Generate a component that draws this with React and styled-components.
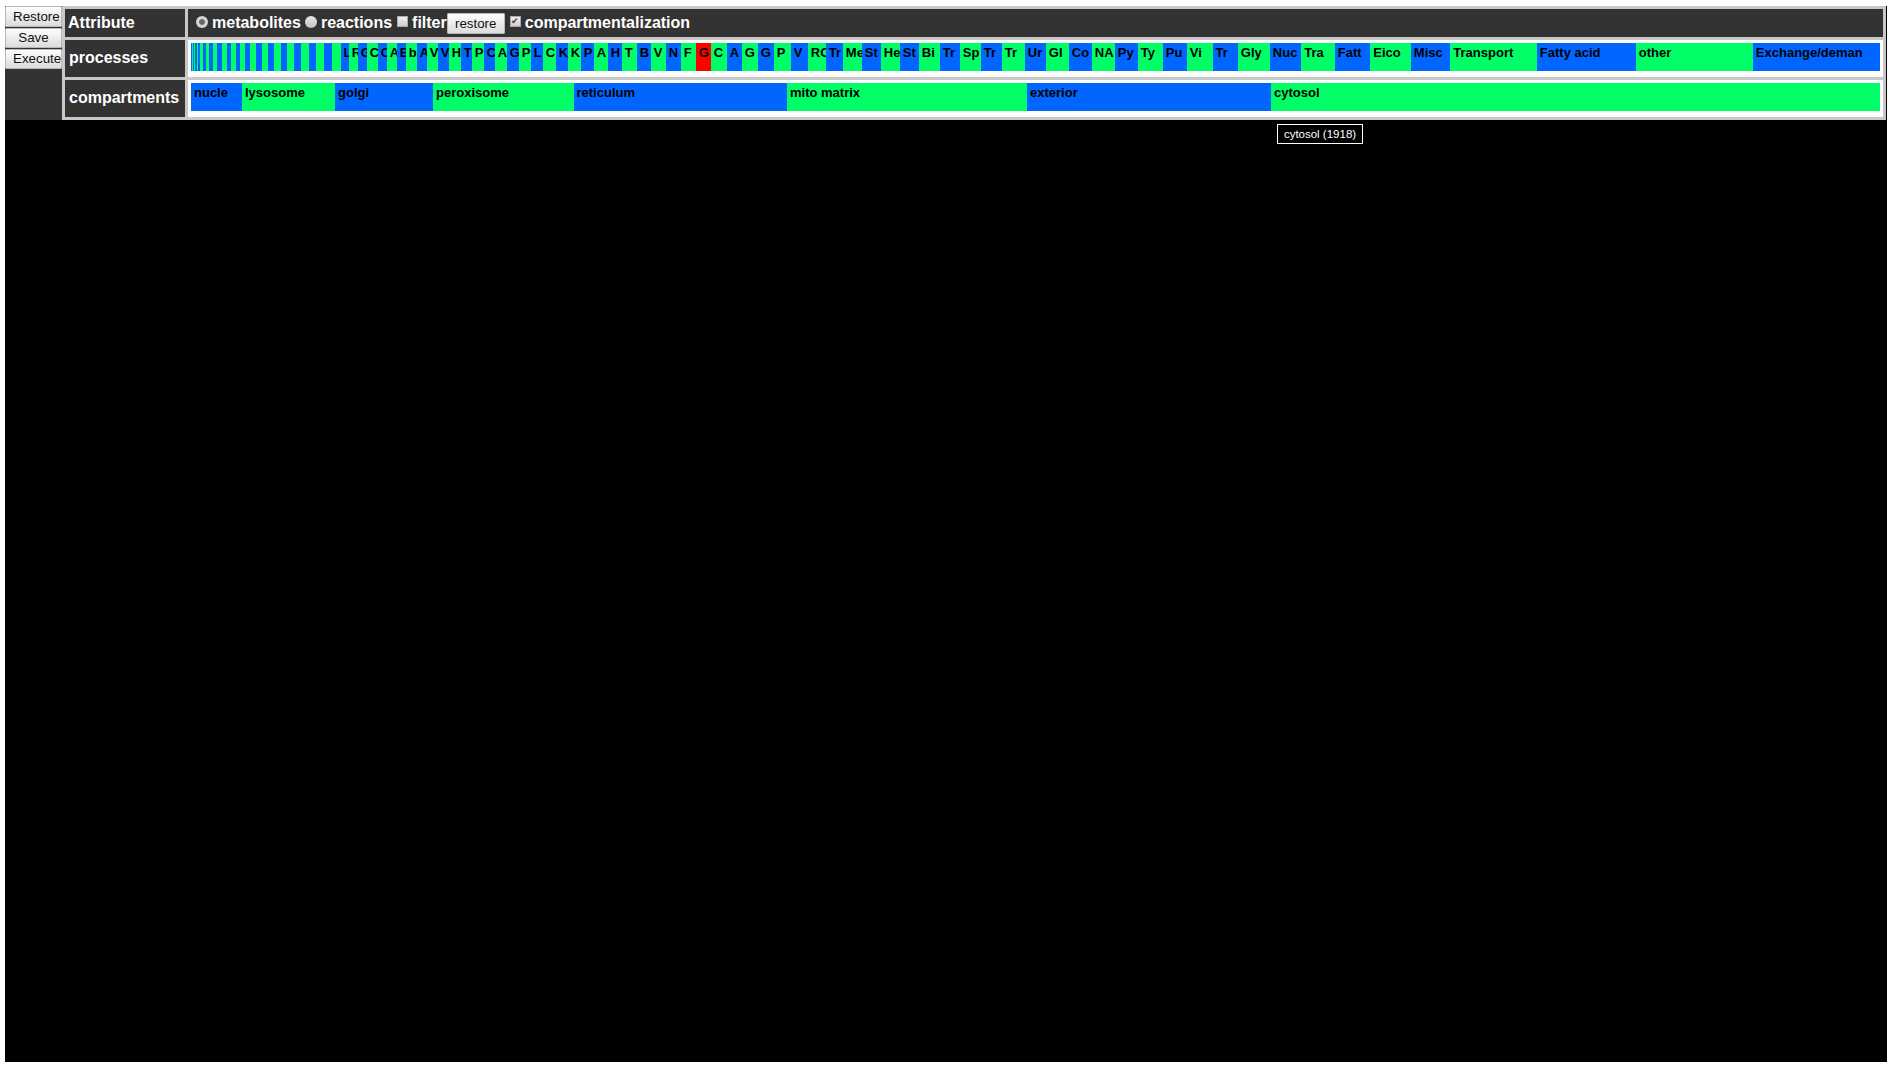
import React from "react";
import styled, { createGlobalStyle } from "styled-components";

const BLUE = "#0066ff";
const GREEN = "#00ff66";
const RED = "#ff0000";

// [label, right edge in px from the page left]
const PROCESSES = [
  ["", 192], ["", 193], ["", 194.1], ["", 195.3], ["", 196.7], ["", 198.3],
  ["", 200.3], ["", 203.3], ["", 206], ["", 209], ["", 212.7], ["", 217.3],
  ["", 222.3], ["", 226.7], ["", 230.7], ["", 235.7], ["", 240.3], ["", 245.3],
  ["", 250.3], ["", 255.7], ["", 261.7], ["", 268], ["", 274.3], ["", 281],
  ["", 287.3], ["", 294.3], ["", 301], ["", 308.7], ["", 316], ["", 324],
  ["", 332], ["", 340.7],
  ["L", 349], ["R", 358], ["G", 367], ["C", 378], ["C", 387], ["A", 397], ["E", 406], ["b", 417],
  ["A", 427], ["V", 438], ["V", 449], ["H", 461], ["T", 472], ["P", 484], ["C", 495], ["A", 507],
  ["G", 519], ["P", 531], ["L", 543], ["C", 556], ["K", 568], ["K", 581], ["P", 594], ["A", 608],
  ["H", 622], ["T", 637], ["B", 651], ["V", 666], ["N", 681], ["F", 696], ["G", 711, RED], ["C", 727],
  ["A", 742], ["G", 758], ["G", 774], ["P", 791], ["V", 808], ["RC", 826], ["Tr", 843], ["Me", 862],
  ["St", 881], ["He", 900], ["St", 919], ["Bi", 940], ["Tr", 960], ["Sp", 981], ["Tr", 1002], ["Tr", 1025],
  ["Ur", 1046], ["Gl", 1069], ["Co", 1092], ["NA", 1115], ["Py", 1138], ["Ty", 1163], ["Pu", 1187], ["Vi", 1212.7],
  ["Tr", 1238], ["Gly", 1270], ["Nuc", 1301.5], ["Tra", 1335], ["Fatt", 1370.5], ["Eico", 1411], ["Misc", 1450.5],
  ["Transport", 1537], ["Fatty acid", 1636], ["other", 1753], ["Exchange/deman", 1880],
];

const COMPARTMENTS = [
  ["nucle", 242], ["lysosome", 335], ["golgi", 433], ["peroxisome", 573.5],
  ["reticulum", 787], ["mito matrix", 1027], ["exterior", 1271], ["cytosol", 1880],
];

const GlobalStyle = createGlobalStyle`
  html, body {
    margin: 0;
    background: #fff;
  }
  body {
    font-family: "Liberation Sans", Arial, sans-serif;
  }
`;

const Frame = styled.div`
  position: relative;
  width: 1882px;
  height: 1056px;
  margin: 6px 0 0 5px;
  background: #000;
`;

const Header = styled.div`
  display: flex;
  width: 1881px;
`;

const Sidebar = styled.div`
  display: flex;
  flex-direction: column;
  gap: 0.5px;
  width: 57px;
  height: 114px;
  background: #333;
`;

const Button = styled.button`
  box-sizing: border-box;
  height: ${(p) => p.$height || 21}px;
  padding: 0 7px;
  border: 1px solid #b8b8b8;
  border-radius: 1px;
  background: linear-gradient(#fdfdfd, #dcdcdc);
  color: #111;
  font-family: "Liberation Sans", Arial, sans-serif;
  font-size: 13.33px;
  white-space: nowrap;
`;

const SideButton = styled(Button)`
  width: 57px;
`;

const Table = styled.div`
  flex: 1;
  display: grid;
  grid-template-columns: 120px 1fr;
  grid-template-rows: 28px 37px 37px;
  gap: 3px;
  padding: 3px;
  background: #c8c8c8;
`;

const LabelCell = styled.div`
  display: flex;
  align-items: center;
  padding: 0 0 ${(p) => p.$lift || 0}px ${(p) => p.$indent}px;
  background: #333;
  color: #fff;
  font-size: 16px;
  font-weight: bold;
`;

const AttributeBar = styled.div`
  display: flex;
  align-items: center;
  padding-left: 8px;
  background: #333;
  color: #fff;
  font-size: 16px;
  font-weight: bold;
`;

const Option = styled.label`
  display: flex;
  align-items: center;
  gap: 4px;
  margin-right: ${(p) => p.$after || 0}px;
  white-space: nowrap;
`;

const Radio = styled.input.attrs({ type: "radio" })`
  appearance: none;
  box-sizing: border-box;
  width: 12px;
  height: 12px;
  margin: -3px 0 0;
  border-radius: 50%;
  background: ${(p) =>
    p.checked
      ? "radial-gradient(circle, #666 0 2.5px, #d4d4d4 3.2px)"
      : "linear-gradient(#e8e8e8, #c4c4c4)"};
`;

const Check = styled.input.attrs({ type: "checkbox" })`
  appearance: none;
  box-sizing: border-box;
  width: 11px;
  height: 11px;
  margin: -4px 0 0;
  border: 1px solid #aaa;
  background: linear-gradient(#f0f0f0, #cfcfcf);
  display: grid;
  place-content: center;
  &:checked::after {
    content: "✔";
    color: #444;
    font-size: 9px;
    line-height: 9px;
  }
`;

const RestoreButton = styled(Button)`
  width: 58px;
  margin: 1px 5px 0 0;
  position: relative;
  padding: 0 4px;
  z-index: 1;
`;

const ValueCell = styled.div`
  padding: 3px 3px 6px;
  background: #fff;
`;

const Bar = styled.div`
  display: flex;
  height: 28px;
`;

const Segment = styled.div`
  box-sizing: border-box;
  flex: 0 0 auto;
  overflow: hidden;
  padding: ${(p) => (p.$labelled ? "2px 0 0 3px" : "0")};
  color: #000;
  font-size: 13px;
  font-weight: bold;
  line-height: 15px;
  white-space: nowrap;
  background: ${(p) => p.$color};
`;

const Tooltip = styled.div`
  position: absolute;
  left: 1272px;
  top: 118px;
  box-sizing: border-box;
  width: 86px;
  height: 20px;
  border: 1px solid #fff;
  background: #000;
  color: #fff;
  font-size: 11.5px;
  line-height: 18px;
  text-align: center;
  white-space: nowrap;
`;

const SegmentBar = ({ items }) => {
  let left = 191;
  return (
    <Bar>
      {items.map(([label, right, color], i) => {
        const width = right - left;
        left = right;
        return (
          <Segment
            key={i}
            style={{ width }}
            $labelled={label !== ""}
            $color={color || (i % 2 === 0 ? BLUE : GREEN)}
          >
            {label}
          </Segment>
        );
      })}
    </Bar>
  );
};

export default function App() {
  return (
    <>
      <GlobalStyle />
      <Frame>
        <Header>
          <Sidebar>
            <SideButton>Restore</SideButton>
            <SideButton $height={20.5}>Save</SideButton>
            <SideButton $height={20.5}>Execute</SideButton>
          </Sidebar>
          <Table>
            <LabelCell $indent={3}>Attribute</LabelCell>
            <AttributeBar>
              <Option $after={4}>
                <Radio name="kind" checked readOnly />
                metabolites
              </Option>
              <Option $after={5}>
                <Radio name="kind" checked={false} readOnly />
                reactions
              </Option>
              <Option>
                <Check readOnly />
                filter
              </Option>
              <RestoreButton>restore</RestoreButton>
              <Option>
                <Check checked readOnly />
                compartmentalization
              </Option>
            </AttributeBar>
            <LabelCell $indent={4} $lift={2}>processes</LabelCell>
            <ValueCell>
              <SegmentBar items={PROCESSES} />
            </ValueCell>
            <LabelCell $indent={4} $lift={2}>compartments</LabelCell>
            <ValueCell>
              <SegmentBar items={COMPARTMENTS} />
            </ValueCell>
          </Table>
        </Header>
        <Tooltip>cytosol (1918)</Tooltip>
      </Frame>
    </>
  );
}
